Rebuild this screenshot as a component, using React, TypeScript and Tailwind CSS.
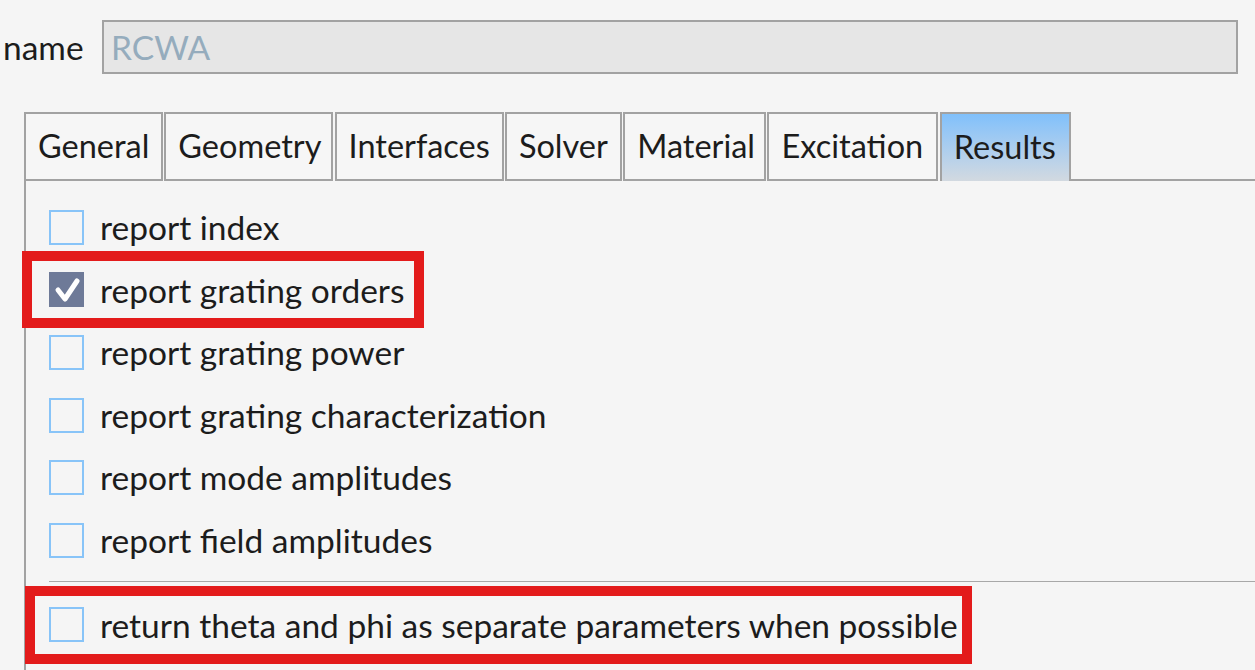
import React from "react";

const tabs: { label: string; w: string; active?: boolean }[] = [
  { label: "General", w: "w-[139px]" },
  { label: "Geometry", w: "w-[169px]" },
  { label: "Interfaces", w: "w-[169px]" },
  { label: "Solver", w: "w-[117px]" },
  { label: "Material", w: "w-[143px]" },
  { label: "Excitation", w: "w-[171px]" },
  { label: "Results", w: "w-[131px]", active: true },
];

function Box({ checked }: { checked?: boolean }) {
  if (checked) {
    return (
      <div className="w-[35px] h-[35px] bg-[#6e7a98] shrink-0 flex items-center justify-center">
        <svg width="35" height="35" viewBox="0 0 35 35">
          <path d="M9 18 L16 27 L28 9" fill="none" stroke="#ffffff" strokeWidth="5" strokeLinecap="round" strokeLinejoin="round" />
        </svg>
      </div>
    );
  }
  return <div className="w-[35px] h-[35px] border-2 border-[#88c4f8] shrink-0" />;
}

function Row({ label, checked }: { label: string; checked?: boolean }) {
  return (
    <div className="h-[62.6px] flex items-center gap-[16px]">
      <Box checked={checked} />
      <span className="leading-none text-[#1c1c1c] text-[33.5px] mt-[1px]">{label}</span>
    </div>
  );
}

export default function App() {
  return (
    <div
      className="w-[1255px] h-[670px] bg-[#f5f5f5] overflow-hidden relative text-[32.5px]"
      style={{ fontFamily: "Lato, 'Noto Sans', sans-serif" }}
    >
      <div className="flex items-center pt-[20px]">
        <div className="w-[102px] pl-[3px] text-[#1c1c1c] text-[33.5px]">name</div>
        <div className="w-[1136px] h-[54px] border-2 border-[#a2a2a2] bg-[#e6e6e6] flex items-center pl-[7px] text-[#95acbd] text-[33.5px]">
          RCWA
        </div>
      </div>

      <div className="ml-[24px] mt-[38px]">
        <div className="flex items-end">
          {tabs.map((t, i) => (
            <div
              key={t.label}
              className={
                (t.active
                  ? "border-2 border-b-0 border-[#a2a2a2] bg-gradient-to-b from-[#80c0fb] to-[#d2d9e0] "
                  : "border-2 border-[#a2a2a2] bg-[#f6f6f6] ") +
                t.w +
                " h-[69px] flex items-center pl-[12px] text-[#1c1c1c] " +
                (i > 0 ? "ml-[1.3px]" : "")
              }
            >
              {t.label}
            </div>
          ))}
          <div className="flex-1 border-b-2 border-[#a2a2a2]" />
        </div>
        <div className="border-l-2 border-[#a2a2a2] pl-[23px] pt-[15px] h-[500px]">
          <Row label="report index" />
          <Row label="report grating orders" checked />
          <Row label="report grating power" />
          <Row label="report grating characterization" />
          <Row label="report mode amplitudes" />
          <Row label="report field amplitudes" />
          <div className="mt-[9px] h-px bg-[#a8a8a8]" />
          <div className="mt-[12px]">
            <Row label="return theta and phi as separate parameters when possible" />
          </div>
        </div>
      </div>

      <div className="absolute left-[22px] top-[251px] w-[402px] h-[77px] border-[10px] border-[#e31b1b]" />
      <div className="absolute left-[25px] top-[586px] w-[947px] h-[78px] border-[10px] border-[#e31b1b]" />
    </div>
  );
}
